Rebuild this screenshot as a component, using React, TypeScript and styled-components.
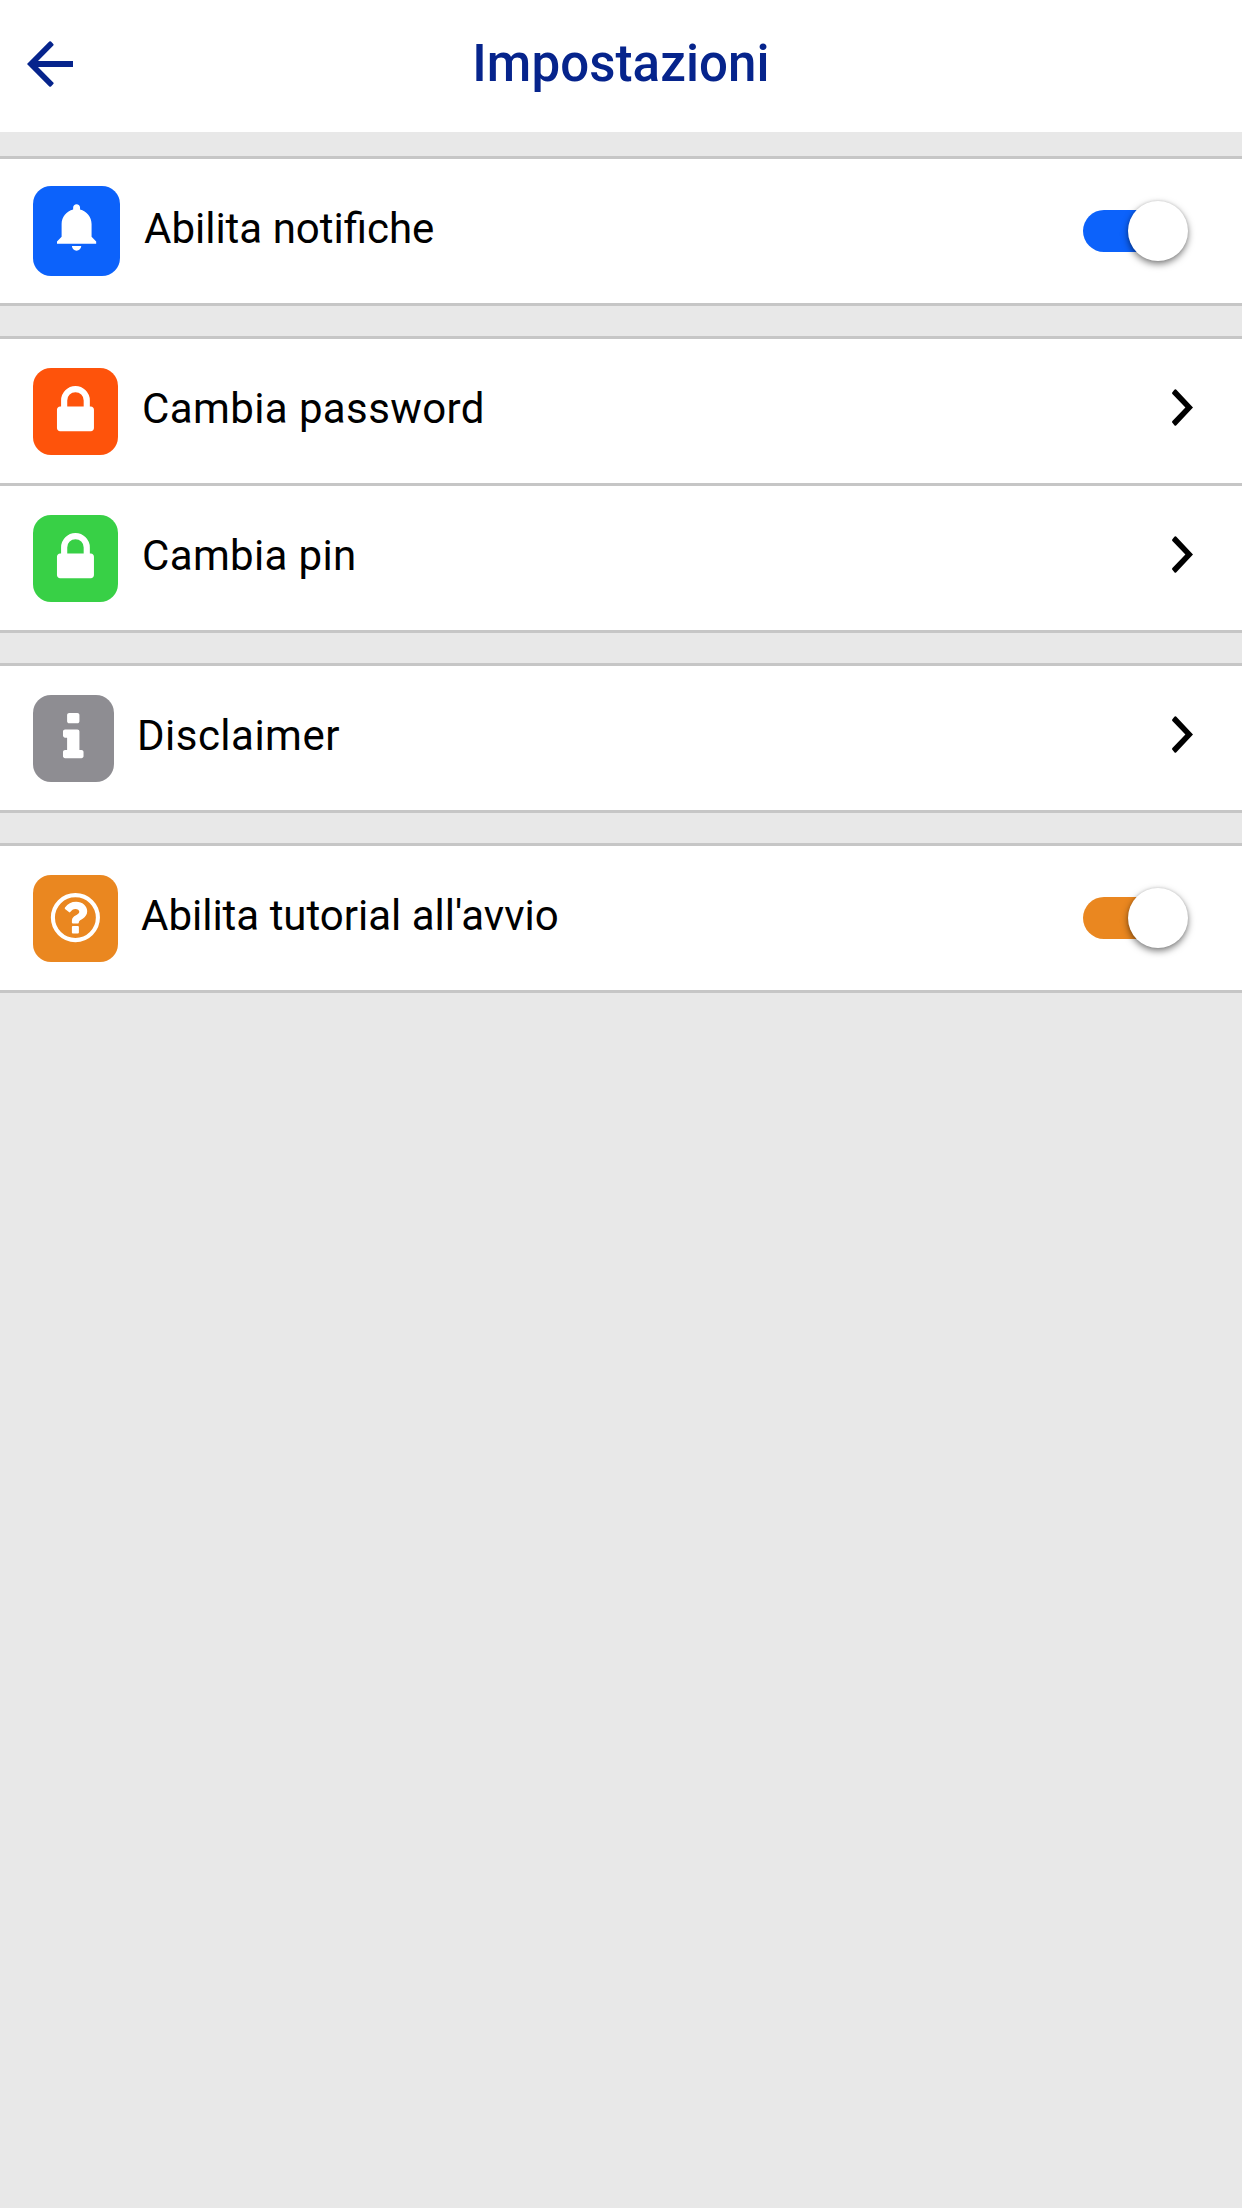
import React, { useState } from 'react';
import styled, { createGlobalStyle } from 'styled-components';

const GlobalStyle = createGlobalStyle`
  * { box-sizing: border-box; }
  html, body { margin: 0; padding: 0; background: #e8e8e8; }
`;

const Screen = styled.div`
  display: flex;
  flex-direction: column;
  width: 1242px;
  min-height: 2208px;
  background: #e8e8e8;
  font-family: Roboto, 'Liberation Sans', sans-serif;
`;

const Header = styled.header`
  display: grid;
  grid-template-columns: 100px 1fr 100px;
  align-items: center;
  height: 132px;
  padding-bottom: 4px;
  background: #fff;
  color: #06248c;
`;

const BackButton = styled.button`
  display: flex;
  padding: 0 0 0 27px;
  border: 0;
  background: none;
  color: inherit;
`;

const Title = styled.h1`
  margin: 0;
  text-align: center;
  font-size: 51px;
  line-height: 60px;
  font-weight: 500;
  letter-spacing: 0.1px;
`;

const Sections = styled.main`
  display: flex;
  flex-direction: column;
  gap: 30px;
  padding-top: 24px;
`;

const Section = styled.section`
  border-top: 3px solid #c6c6c6;
  background: #fff;
`;

const Row = styled.div`
  display: flex;
  align-items: center;
  height: 147px;
  padding: 0 48px 0 33px;
  border-bottom: 3px solid #c6c6c6;
`;

const Tile = styled.div<{ $color: string; $width: number; $height: number }>`
  display: flex;
  flex: none;
  width: ${p => p.$width}px;
  height: ${p => p.$height}px;
  margin-top: ${p => (p.$height % 2 ? 1 : 0)}px;
  border-radius: 18px;
  background: ${p => p.$color};
  color: #fff;
`;

const Label = styled.span<{ $gap: number; $tracking: number }>`
  flex: 1;
  margin-left: ${p => p.$gap}px;
  padding-bottom: 4px;
  font-size: 42px;
  line-height: 50px;
  letter-spacing: ${p => (p.$tracking ? `${p.$tracking}px` : 'normal')};
  color: #000;
  white-space: pre;
`;

const Track = styled.button<{ $color: string; $on: boolean }>`
  display: flex;
  align-items: center;
  justify-content: ${p => (p.$on ? 'flex-end' : 'flex-start')};
  width: 102px;
  height: 42px;
  margin-right: 9px;
  padding: 0;
  border: 0;
  border-radius: 21px;
  background: ${p => (p.$on ? p.$color : '#b5b5b5')};
`;

const Knob = styled.span`
  flex: none;
  width: 60px;
  height: 60px;
  margin-right: -3px;
  border-radius: 50%;
  background: #fff;
  box-shadow: 0 3px 7px rgba(0, 0, 0, 0.5), 0 0 3px rgba(0, 0, 0, 0.12);
`;

const Arrow = styled.svg`
  flex: none;
  margin: 0 1px 7px 0;
`;

const BackIcon = () => (
  <svg width="46" height="46" viewBox="0 0 46 46" fill="currentColor">
    <path d="M0 23 22.3.6Q23.2-.2 24 .6L26.3 2.9Q27 3.7 26.3 4.4L11 20H46V26H11L26.3 41.6Q27 42.3 26.3 43.1L24 45.4Q23.2 46.2 22.3 45.4Z" />
  </svg>
);

const Chevron = () => (
  <Arrow width="21" height="37" viewBox="0 0 21 37">
    <path d="M.4 4.9Q-.3 4 .4 3.2L2.4.7Q3.2-.3 4.1.6L21 18.4 4.1 36.4Q3.2 37.3 2.4 36.3L.4 33.8Q-.3 33 .4 32.1L13.4 18.4Z" />
  </Arrow>
);

const Bell = () => (
  <svg width="87" height="90" fill="currentColor">
    <path
      transform="translate(15.1 13) scale(.1113)"
      d="M256 464c22.779 0 41.411-18.719 41.411-41.6h-82.823c0 22.881 18.633 41.6 41.412 41.6zm134.589-124.8V224.8c0-63.44-44.516-117.518-103.53-131.041V79.2c0-17.682-13.457-31.2-31.059-31.2s-31.059 13.518-31.059 31.2v14.559c-59.015 13.523-103.53 67.601-103.53 131.041v114.4L80 380.8v20.8h352v-20.8l-41.411-41.6z"
    />
  </svg>
);

const Lock = () => (
  <svg width="85" height="87" fill="currentColor">
    <path
      transform="translate(13.7 13.9) scale(.0321)"
      d="M640 768h512v-192q0-106-75-181t-181-75-181 75-75 181v192zm832 96v576q0 40-28 68t-68 28h-960q-40 0-68-28t-28-68v-576q0-40 28-68t68-28h32v-192q0-184 132-316t316-132 316 132 132 316v192h32q40 0 68 28t28 68z"
    />
  </svg>
);

const Info = () => (
  <svg width="81" height="87" fill="currentColor">
    <path
      transform="translate(11.5 13.9) scale(.0321)"
      d="M1216 1344v128q0 26-19 45t-45 19h-512q-26 0-45-19t-19-45v-128q0-26 19-45t45-19h64v-384h-64q-26 0-45-19t-19-45v-128q0-26 19-45t45-19h384q26 0 45 19t19 45v576h64q26 0 45 19t19 45zm-128-1152v192q0 26-19 45t-45 19h-256q-26 0-45-19t-19-45v-192q0-26 19-45t45-19h256q26 0 45 19t19 45z"
    />
  </svg>
);

const Help = () => (
  <svg width="85" height="87" fill="currentColor">
    <circle cx="42.4" cy="42.6" r="22.5" fill="none" stroke="currentColor" strokeWidth="4.1" />
    <path d="M32 34Q31.4 33.3 32 32.4Q36 26.8 43.2 26.8C49.4 26.8 54.2 31 54.2 36.2C54.2 43.4 45.9 44.4 45.9 47.2Q45.9 48.5 44.9 48.5H40Q38.9 48.5 38.9 47.4V45.8C38.9 40 46.3 40.4 46.3 36.8C46.3 35.1 44.6 34 42.5 34C40 34 39 35.3 37.3 37.1Q36.6 37.7 35.9 37.1Z" />
    <rect x="38.9" y="51" width="7" height="7.4" rx="1" />
  </svg>
);

type ToggleProps = { color: string; label: string };

const Toggle = ({ color, label }: ToggleProps) => {
  const [on, setOn] = useState(true);
  return (
    <Track $color={color} $on={on} role="switch" aria-checked={on} aria-label={label} onClick={() => setOn(!on)}>
      <Knob />
    </Track>
  );
};

type Item = {
  label: string;
  color: string;
  width: number;
  height: number;
  Icon: () => React.ReactElement;
  gap?: number;
  tracking?: number;
  toggle?: boolean;
};

const sections: Item[][] = [
  [{ label: 'Abilita notifiche', color: '#0c62fb', width: 87, height: 90, Icon: Bell, toggle: true }],
  [
    { label: 'Cambia password', color: '#fe530b', width: 85, height: 87, Icon: Lock, tracking: 0.4 },
    { label: 'Cambia pin', color: '#38d046', width: 85, height: 87, Icon: Lock, tracking: 0.36 },
  ],
  [{ label: 'Disclaimer', color: '#8e8d92', width: 81, height: 87, Icon: Info, gap: 23, tracking: 0.48 }],
  [{ label: "Abilita tutorial all'avvio", color: '#ea8720', width: 85, height: 87, Icon: Help, gap: 23, toggle: true }],
];

export default function App() {
  return (
    <Screen>
      <GlobalStyle />
      <Header>
        <BackButton aria-label="Indietro">
          <BackIcon />
        </BackButton>
        <Title>Impostazioni</Title>
      </Header>
      <Sections>
        {sections.map((items, i) => (
          <Section key={i}>
            {items.map(({ label, color, width, height, Icon, toggle, gap = 24, tracking = 0 }) => (
              <Row key={label}>
                <Tile $color={color} $width={width} $height={height}>
                  <Icon />
                </Tile>
                <Label $gap={gap} $tracking={tracking}>{label}</Label>
                {toggle ? <Toggle color={color} label={label} /> : <Chevron />}
              </Row>
            ))}
          </Section>
        ))}
      </Sections>
    </Screen>
  );
}
